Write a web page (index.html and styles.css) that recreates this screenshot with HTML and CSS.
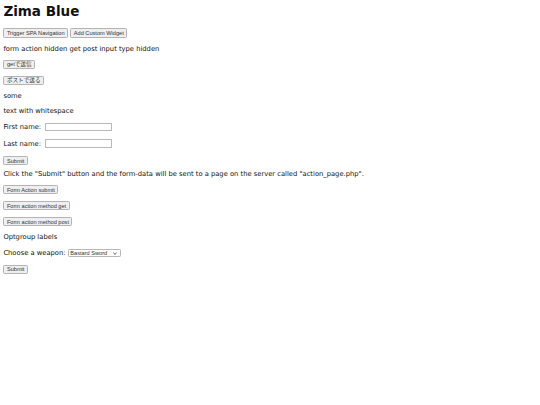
FILE: index.html
```html
<!DOCTYPE html>
<html lang="en">
<head>
    <meta charset="UTF-8">
    <title>Zima Blue</title>
    <link rel="stylesheet" href="styles.css">
</head>
<body>
    <h1>Zima Blue</h1>
    <div class="actions">
        <button>Trigger SPA Navigation</button>
        <button>Add Custom Widget</button>
    </div>
    <p>form action hidden get post input type hidden</p>
    <form class="stack"><button>getで送信</button></form>
    <form class="stack"><button>ポストで送る</button></form>
    <p>some</p>
    <p>text with whitespace</p>
    <form>
        <label>First name: <input type="text" class="field"></label><br><br>
        <label>Last name: <input type="text" class="field"></label><br><br>
        <input type="submit" value="Submit">
    </form>
    <p class="note">Click the "Submit" button and the form-data will be sent to a page on the server called "action_page.php".</p>
    <form class="stack"><button>Form Action submit</button></form>
    <form class="stack"><button>Form action method get</button></form>
    <form class="stack"><button>Form action method post</button></form>
    <p>Optgroup labels</p>
    <form>
        <label>Choose a weapon:
            <select class="weapon">
                <optgroup label="Swords">
                    <option>Bastard Sword</option>
                    <option>Claymore</option>
                </optgroup>
                <optgroup label="Axes">
                    <option>Battle Axe</option>
                </optgroup>
            </select>
        </label><br><br>
        <input type="submit" value="Submit">
    </form>
</body>
</html>
```
FILE: styles.css
```css
html {
    zoom: 0.421875;
}
body {
    font-family: "DejaVu Sans", sans-serif;
    font-size: 16px;
    color: #111;
}
h1 {
    margin-top: 0;
}
p {
    margin: 17px 0;
}
.note {
    margin-top: 11px;
}
button, input, select {
    font-family: "Liberation Sans", "Noto Sans CJK JP", sans-serif;
    font-size: 13.33px;
}
button, input[type="submit"] {
    background: #efefef;
    border: 2px solid #b4b4b4;
    border-radius: 3px;
    color: #333;
    padding: 1px 6px;
    line-height: 15px;
}
.field {
    box-sizing: border-box;
    width: 158px;
    height: 21px;
    margin-left: 4px;
    border: 2px solid #b8b8b8;
    border-radius: 2px;
}
.weapon {
    -webkit-appearance: none;
    appearance: none;
    box-sizing: border-box;
    width: 127px;
    height: 20px;
    padding: 0 20px 0 4px;
    border: 2px solid #b8b8b8;
    border-radius: 3px;
    background: #fff url("data:image/svg+xml,%3Csvg xmlns='http://www.w3.org/2000/svg' width='10' height='6' viewBox='0 0 10 6'%3E%3Cpath d='M1 1l4 4 4-4' fill='none' stroke='%23333' stroke-width='1.6'/%3E%3C/svg%3E") no-repeat right 6px center;
    color: #333;
}
.stack {
    margin: 16px 0;
}
```
